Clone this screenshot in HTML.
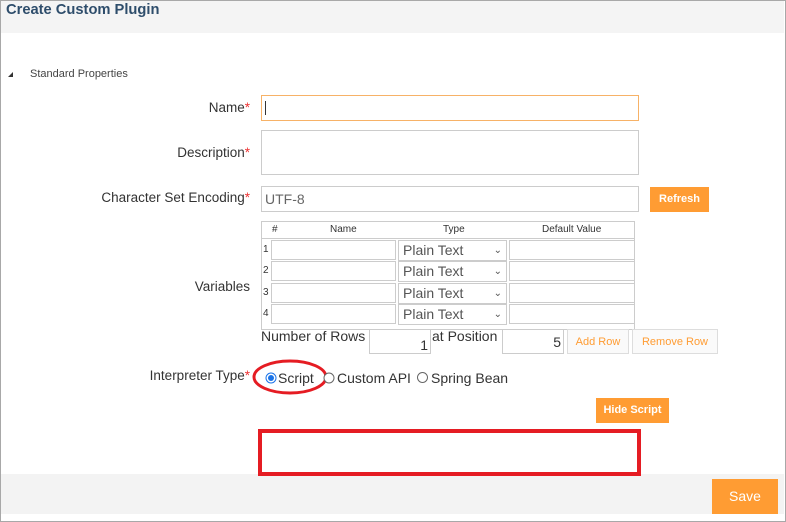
<!DOCTYPE html>
<html><head><style>
*{box-sizing:border-box;margin:0;padding:0}
body{width:786px;height:522px;position:relative;background:#fff;font-family:"Liberation Sans",Arial,sans-serif;color:#333;overflow:hidden}
.a{position:absolute}
.frame{left:0;top:0;width:786px;height:522px;border:1px solid #a8a8a8}
.hdr{left:1px;top:1px;width:783px;height:32px;background:#f4f4f4}
.title{left:6px;top:2px;font-size:14.7px;font-weight:bold;color:#2e4d6b}
.lbl{font-size:13.5px;text-align:right;width:240px;left:10px}
.req{color:#e33}
.inp{border:1px solid #ccc;background:#fff}
.btn{background:#ff9c33;color:#fff;font-size:11px;font-weight:bold;text-align:center}
.wbtn{border:1px solid #ddd;background:#fafafa;color:#ff9c33;font-size:11px;text-align:center}
.sel{border:1px solid #ccc;font-size:14px;color:#555;padding-left:4px;line-height:19px}
.sm{font-size:10px;color:#333}
</style></head><body>
<div class="a hdr"></div>
<div class="a title">Create Custom Plugin</div>
<div class="a" style="left:8px;top:72px;width:0;height:0;border-left:5px solid transparent;border-bottom:5px solid #333;"></div>
<div class="a" style="left:30px;top:68px;font-size:11px;color:#444">Standard Properties</div>

<div class="a lbl" style="top:100px">Name<span class="req">*</span></div>
<div class="a inp" style="left:261px;top:95px;width:378px;height:26px;border-color:#f7b267"></div>
<div class="a" style="left:265px;top:101px;width:1px;height:14px;background:#333"></div>

<div class="a lbl" style="top:145px">Description<span class="req">*</span></div>
<div class="a inp" style="left:261px;top:130px;width:378px;height:45px"></div>

<div class="a lbl" style="top:190px">Character Set Encoding<span class="req">*</span></div>
<div class="a inp" style="left:261px;top:186px;width:378px;height:26px;font-size:14px;color:#666;padding:4px 0 0 3px">UTF-8</div>
<div class="a btn" style="left:650px;top:187px;width:59px;height:25px;line-height:25px">Refresh</div>

<div class="a lbl" style="top:279px">Variables</div>
<div class="a" style="left:261px;top:221px;width:374px;height:109px;border:1px solid #ccc"></div>
<div class="a sm" style="left:272px;top:224px">#</div>
<div class="a sm" style="left:330px;top:224px">Name</div>
<div class="a sm" style="left:443px;top:224px">Type</div>
<div class="a sm" style="left:542px;top:224px">Default Value</div>
<div class="a" style="left:262px;top:238px;width:372px;height:1px;background:#ccc"></div>

<div class="a sm" style="left:263px;top:244px">1</div>
<div class="a inp" style="left:271px;top:240px;width:125px;height:20px"></div>
<div class="a sel" style="left:398px;top:240px;width:109px;height:21px">Plain Text<span style="position:absolute;right:4px;font-size:10px">&#8964;</span></div>
<div class="a inp" style="left:509px;top:240px;width:126px;height:20px"></div>

<div class="a sm" style="left:263px;top:265px">2</div>
<div class="a inp" style="left:271px;top:261px;width:125px;height:20px"></div>
<div class="a sel" style="left:398px;top:261px;width:109px;height:21px">Plain Text<span style="position:absolute;right:4px;font-size:10px">&#8964;</span></div>
<div class="a inp" style="left:509px;top:261px;width:126px;height:20px"></div>

<div class="a sm" style="left:263px;top:287px">3</div>
<div class="a inp" style="left:271px;top:283px;width:125px;height:20px"></div>
<div class="a sel" style="left:398px;top:283px;width:109px;height:21px">Plain Text<span style="position:absolute;right:4px;font-size:10px">&#8964;</span></div>
<div class="a inp" style="left:509px;top:283px;width:126px;height:20px"></div>

<div class="a sm" style="left:263px;top:308px">4</div>
<div class="a inp" style="left:271px;top:304px;width:125px;height:20px"></div>
<div class="a sel" style="left:398px;top:304px;width:109px;height:21px">Plain Text<span style="position:absolute;right:4px;font-size:10px">&#8964;</span></div>
<div class="a inp" style="left:509px;top:304px;width:126px;height:20px"></div>

<div class="a" style="left:261px;top:328px;font-size:14px">Number of Rows</div>
<div class="a inp" style="left:369px;top:329px;width:62px;height:25px;font-size:14px;text-align:right;padding:7px 2px 0 0">1</div>
<div class="a" style="left:432px;top:328px;font-size:14px">at Position</div>
<div class="a inp" style="left:502px;top:329px;width:62px;height:25px;font-size:14px;text-align:right;padding:4px 2px 0 0">5</div>
<div class="a wbtn" style="left:567px;top:329px;width:62px;height:25px;line-height:24px">Add Row</div>
<div class="a wbtn" style="left:632px;top:329px;width:86px;height:25px;line-height:24px">Remove Row</div>

<div class="a lbl" style="top:368px">Interpreter Type<span class="req">*</span></div>
<svg class="a" style="left:250px;top:356px" width="90" height="42"><ellipse cx="40" cy="21" rx="36" ry="16" fill="none" stroke="#e51c23" stroke-width="3"/><circle cx="21" cy="22" r="5" fill="#fff" stroke="#1a73e8" stroke-width="1"/><circle cx="21" cy="22" r="3" fill="#1a73e8"/><circle cx="79" cy="22" r="5" fill="#fff" stroke="#666" stroke-width="1"/></svg>
<div class="a" style="left:278px;top:370px;font-size:14px">Script</div>
<div class="a" style="left:337px;top:370px;font-size:14px">Custom API</div>
<div class="a" style="left:417px;top:372px;width:11px;height:11px;border:1px solid #666;border-radius:50%"></div>
<div class="a" style="left:431px;top:370px;font-size:14px">Spring Bean</div>

<div class="a btn" style="left:596px;top:398px;width:73px;height:25px;line-height:25px">Hide Script</div>

<div class="a" style="left:1px;top:474px;width:783px;height:40px;background:#f3f3f3"></div>
<div class="a" style="left:258px;top:429px;width:383px;height:47px;border:4px solid #e51c23;background:#fff"></div>
<div class="a btn" style="left:712px;top:479px;width:66px;height:35px;line-height:35px;font-size:14px;font-weight:normal">Save</div>
<div class="a frame"></div>
</body></html>
